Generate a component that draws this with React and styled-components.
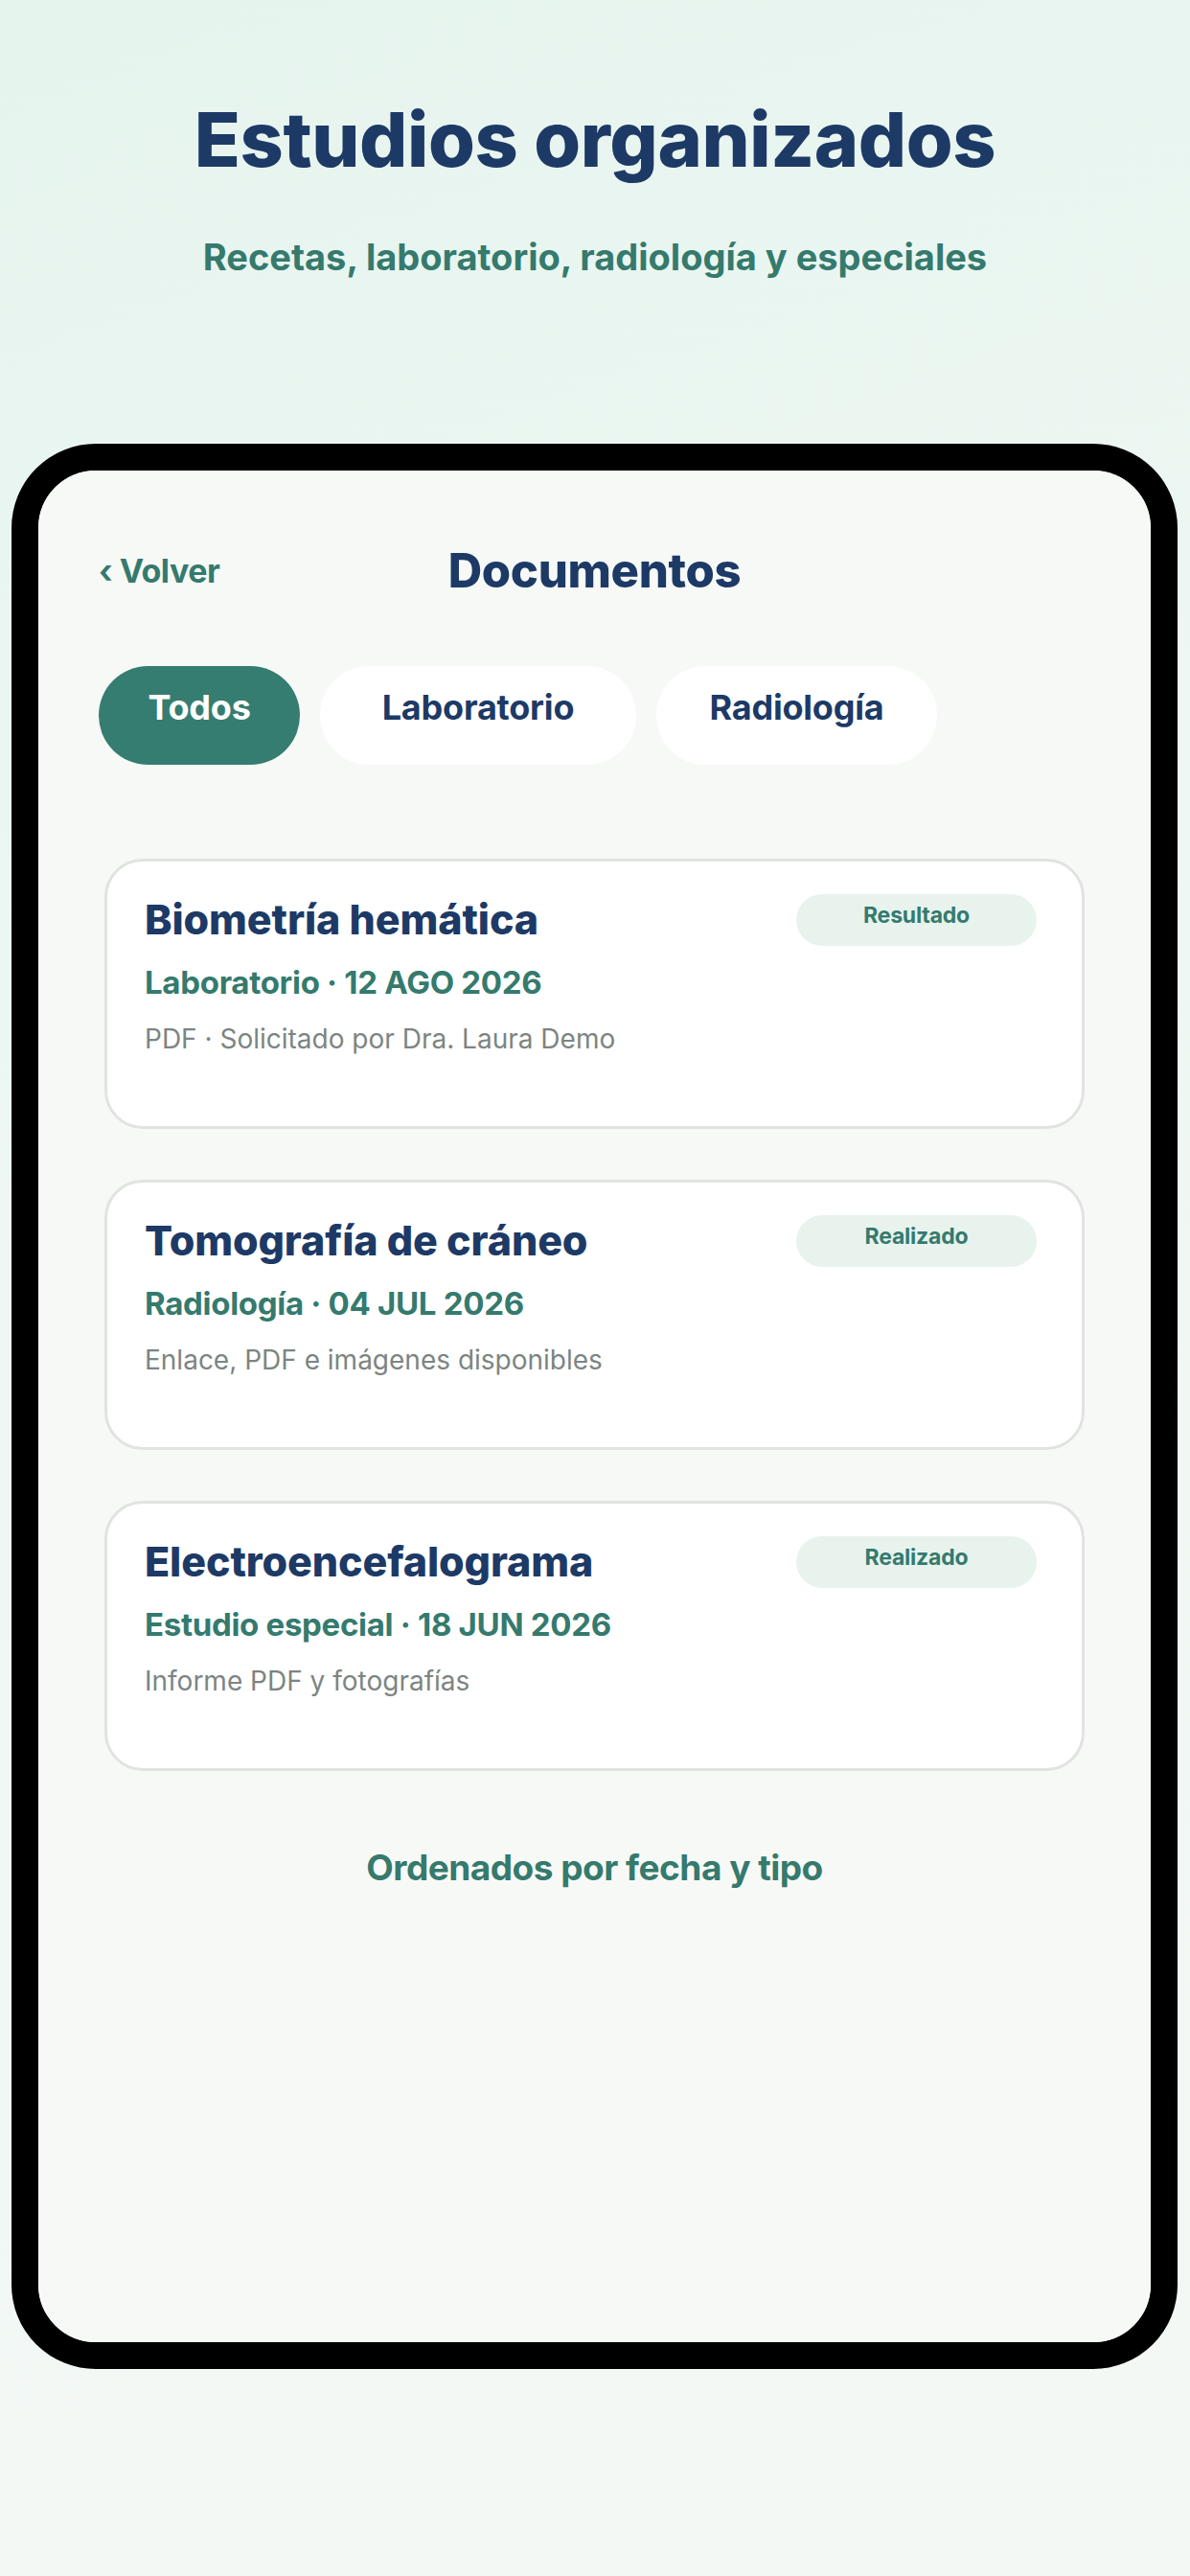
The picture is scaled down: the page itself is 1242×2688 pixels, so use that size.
import React from "react";
import styled, { createGlobalStyle } from "styled-components";

const GlobalStyle = createGlobalStyle`
  html, body {
    margin: 0;
    padding: 0;
  }
  body {
    font-family: Inter, "Noto Sans", sans-serif;
    background: linear-gradient(160deg, #e6f4ee 0%, #eef7f3 40%, #f4f8f5 100%);
    min-height: 2688px;
  }
`;

const Page = styled.div`
  width: 1242px;
  height: 2688px;
  display: flex;
  flex-direction: column;
  align-items: center;
`;

const Headline = styled.h1`
  margin: 106px 0 0;
  font-size: 79px;
  line-height: 1;
  font-weight: 800;
  letter-spacing: -0.4px;
  color: #1d3a66;
`;

const Tagline = styled.p`
  margin: 64px 0 0;
  font-size: 38px;
  line-height: 1;
  font-weight: 700;
  letter-spacing: 0;
  color: #357a6d;
`;

const Frame = styled.div`
  margin: 176px 13px 0 12px;
  align-self: stretch;
  border: 28px solid #000;
  border-radius: 88px;
  overflow: hidden;
`;

const Screen = styled.div`
  height: 1953px;
  box-sizing: border-box;
  background: #f7f9f7;
  padding: 74px 63px 0;
  display: flex;
  flex-direction: column;
`;

const TopBar = styled.div`
  height: 60px;
  display: grid;
  grid-template-columns: 1fr auto 1fr;
  align-items: center;
`;

const Back = styled.span`
  font-size: 34px;
  font-weight: 700;
  color: #357a6d;
  letter-spacing: -0.5px;
`;

const ScreenTitle = styled.span`
  font-size: 49px;
  font-weight: 800;
  color: #1d3a66;
  letter-spacing: -0.3px;
`;

const Tabs = styled.div`
  margin-top: 70px;
  display: flex;
  gap: 21px;
`;

const Tab = styled.button`
  width: ${(p) => p.$width}px;
  height: 103px;
  box-sizing: border-box;
  padding: 0 0 18px;
  border: none;
  border-radius: 52px;
  font-family: inherit;
  font-size: 36px;
  font-weight: 700;
  letter-spacing: -0.2px;
  display: flex;
  align-items: center;
  justify-content: center;
  background: ${(p) => (p.$active ? "#357d70" : "#ffffff")};
  color: ${(p) => (p.$active ? "#ffffff" : "#1d3a66")};
`;

const List = styled.div`
  margin-top: 98px;
  padding: 0 6px;
  display: flex;
  flex-direction: column;
  gap: 53px;
`;

const Card = styled.div`
  height: 282px;
  box-sizing: border-box;
  background: #ffffff;
  border: 3px solid #e1e3e1;
  border-radius: 40px;
  padding: 34px 47px 0 39px;
  display: flex;
  justify-content: space-between;
  align-items: flex-start;
`;

const Info = styled.div`
  padding-top: 5px;
  display: flex;
  flex-direction: column;
`;

const CardTitle = styled.div`
  font-size: 43px;
  line-height: 1;
  font-weight: 800;
  letter-spacing: -0.1px;
  color: #1d3a66;
`;

const Meta = styled.div`
  margin-top: 28px;
  font-size: 33px;
  line-height: 1;
  font-weight: 700;
  letter-spacing: -0.3px;
  color: #357a6d;
`;

const Detail = styled.div`
  margin-top: 28px;
  font-size: 28px;
  line-height: 1;
  font-weight: 400;
  letter-spacing: 0;
  color: #7c8582;
`;

const Badge = styled.span`
  width: 251px;
  height: 54px;
  box-sizing: border-box;
  padding-bottom: 10px;
  border-radius: 27px;
  background: #e8f3ee;
  color: #357a6d;
  font-size: 23px;
  font-weight: 700;
  letter-spacing: -0.2px;
  display: flex;
  align-items: center;
  justify-content: center;
  flex-shrink: 0;
`;

const Footnote = styled.div`
  margin-top: 82px;
  text-align: center;
  font-size: 37px;
  line-height: 1;
  font-weight: 700;
  letter-spacing: -0.5px;
  color: #357a6d;
`;

const tabs = [
  { label: "Todos", width: 210, active: true },
  { label: "Laboratorio", width: 330 },
  { label: "Radiología", width: 293 },
];

const docs = [
  {
    title: "Biometría hemática",
    status: "Resultado",
    meta: "Laboratorio · 12 AGO 2026",
    detail: "PDF · Solicitado por Dra. Laura Demo",
  },
  {
    title: "Tomografía de cráneo",
    status: "Realizado",
    meta: "Radiología · 04 JUL 2026",
    detail: "Enlace, PDF e imágenes disponibles",
  },
  {
    title: "Electroencefalograma",
    status: "Realizado",
    meta: "Estudio especial · 18 JUN 2026",
    detail: "Informe PDF y fotografías",
  },
];

export default function App() {
  return (
    <>
      <GlobalStyle />
      <Page>
        <Headline>Estudios organizados</Headline>
        <Tagline>Recetas, laboratorio, radiología y especiales</Tagline>
        <Frame>
          <Screen>
            <TopBar>
              <Back>‹ Volver</Back>
              <ScreenTitle>Documentos</ScreenTitle>
              <span />
            </TopBar>
            <Tabs>
              {tabs.map((t) => (
                <Tab key={t.label} $width={t.width} $active={t.active}>
                  {t.label}
                </Tab>
              ))}
            </Tabs>
            <List>
              {docs.map((d) => (
                <Card key={d.title}>
                  <Info>
                    <CardTitle>{d.title}</CardTitle>
                    <Meta>{d.meta}</Meta>
                    <Detail>{d.detail}</Detail>
                  </Info>
                  <Badge>{d.status}</Badge>
                </Card>
              ))}
            </List>
            <Footnote>Ordenados por fecha y tipo</Footnote>
          </Screen>
        </Frame>
      </Page>
    </>
  );
}
